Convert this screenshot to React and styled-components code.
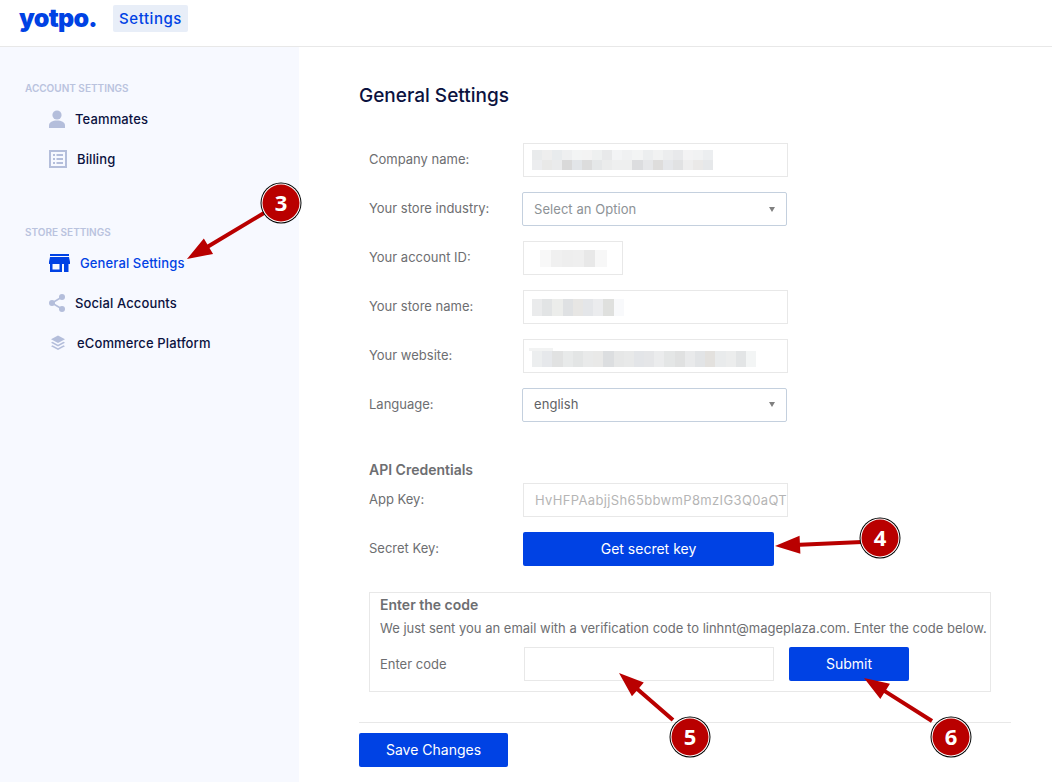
import React from 'react';
import styled, { createGlobalStyle } from 'styled-components';

const GlobalStyle = createGlobalStyle`
  html, body {
    margin: 0;
    padding: 0;
    background: #fff;
    overflow: hidden;
  }
  * {
    box-sizing: border-box;
  }
`;

const Page = styled.div`
  position: relative;
  width: 1052px;
  height: 782px;
  overflow: hidden;
  font-family: Inter, "Liberation Sans", sans-serif;
  background: #fff;
`;

const Header = styled.header`
  display: flex;
  align-items: flex-start;
  height: 47px;
  padding: 5px 0 0 19px;
  border-bottom: 1px solid #e8e8e8;
`;

const Logo = styled.div`
  width: 94px;
  height: 27px;
  font-family: Inter, sans-serif;
  font-size: 25px;
  font-weight: 900;
  line-height: 27px;
  letter-spacing: -0.7px;
  color: #0042e4;
`;

const AppTag = styled.div`
  width: 75px;
  height: 27px;
  border-radius: 2px;
  background: #e8eef8;
  color: #0042e4;
  font-size: 15px;
  font-weight: 500;
  line-height: 27px;
  letter-spacing: 0.55px;
  text-align: center;
`;

const Body = styled.div`
  display: flex;
  height: 735px;
`;

const Sidebar = styled.aside`
  width: 299px;
  flex: none;
  padding-top: 35px;
  background: #f7f9ff;
`;

const SectionLabel = styled.div`
  height: 12px;
  margin: 0 0 5px 25px;
  font-size: 10px;
  font-weight: 600;
  line-height: 12px;
  color: #bac3de;
`;

const NavList = styled.nav`
  display: flex;
  flex-direction: column;
  margin-bottom: 47px;
`;

const NavItem = styled.div`
  display: flex;
  align-items: center;
  gap: 10px;
  height: 40px;
  padding-left: 49px;
  font-size: 13px;
  font-weight: 500;
  letter-spacing: 0.12px;
  color: ${(p) => (p.$active ? '#0042e4' : '#0b1240')};
`;

const Icon = styled.svg`
  flex: none;
  display: block;
  fill: ${(p) => (p.$active ? '#0042e4' : '#b4bedb')};
`;

const Main = styled.main`
  flex: 1;
  padding: 37px 0 0 60px;
`;

const Title = styled.h1`
  margin: 0 0 35px;
  font-size: 19px;
  font-weight: 500;
  line-height: 24px;
  color: #0b1240;
`;

const Form = styled.div`
  display: flex;
  flex-direction: column;
  gap: 15px;
  padding-left: 10px;
`;

const Row = styled.div`
  display: flex;
  align-items: center;
  height: 34px;
`;

const Label = styled.div`
  width: ${(p) => p.$width || 154}px;
  flex: none;
  padding-bottom: ${(p) => p.$lift ?? 2}px;
  font-size: 13px;
  line-height: 18px;
  color: #6d6e71;
`;

const Field = styled.div`
  display: flex;
  align-items: center;
  width: ${(p) => p.$width || 265}px;
  height: 34px;
  padding-left: ${(p) => p.$pad ?? 8}px;
  border: 1px solid #e8e8e8;
  background: #fff;
  font-size: 13px;
  letter-spacing: 0.35px;
  color: #b5b5b5;
  white-space: nowrap;
  overflow: hidden;
`;

const Select = styled.div`
  display: flex;
  align-items: center;
  justify-content: space-between;
  width: 265px;
  height: 34px;
  margin-left: -1px;
  padding: 0 11px ${(p) => (p.$placeholder ? 0 : 2)}px 11px;
  border: 1px solid #c4d0de;
  border-radius: 2px;
  background: #fff;
  font-size: 13px;
  letter-spacing: 0.06px;
  color: ${(p) => (p.$placeholder ? '#8d9296' : '#5f6266')};
`;

const Caret = styled.span`
  width: 0;
  height: 0;
  border-left: 3.5px solid transparent;
  border-right: 3.5px solid transparent;
  border-top: 5px solid #808080;
`;

const Mosaic = styled.div`
  display: flex;
  flex-direction: column;
  flex: none;
`;

const MosaicRow = styled.div`
  display: flex;
`;

const Cell = styled.span`
  width: ${(p) => p.$w}px;
  height: ${(p) => p.$h}px;
  background: ${(p) => p.$c};
`;

const MosaicCap = styled.span`
  width: 24px;
  height: 3px;
  margin: 2px 0 0 -3px;
  background: #f2f3f3;
`;

const Heading = styled.div`
  margin-top: 24px;
  margin-bottom: -11px;
  font-size: 14px;
  font-weight: 600;
  line-height: 18px;
  color: #6d6e71;
`;

const Button = styled.button`
  display: block;
  width: ${(p) => p.$width}px;
  height: 34px;
  padding: 0;
  border: 0;
  border-radius: 2px;
  background: #0042e4;
  color: #fff;
  font-family: inherit;
  font-size: 14px;
  font-weight: 400;
  line-height: 34px;
`;

const CodeBox = styled.section`
  width: 622px;
  height: 100px;
  margin-top: 11px;
  padding: 3px 0 0 10px;
  border: 1px solid #e8e8e8;
`;

const CodeHeading = styled.div`
  font-size: 14px;
  font-weight: 600;
  line-height: 18px;
  color: #6d6e71;
`;

const CodeText = styled.p`
  margin: 5px 0 10px;
  font-size: 13px;
  line-height: 18px;
  color: #6d6e71;
  white-space: nowrap;
`;

const SubmitSlot = styled.div`
  margin-left: 15px;
`;

const Divider = styled.hr`
  width: 652px;
  height: 1px;
  margin: 30px 0 10px;
  border: 0;
  background: #e8e8e8;
`;

const Overlay = styled.svg`
  position: absolute;
  top: 0;
  left: 0;
  pointer-events: none;
`;

const BadgeNumber = styled.text`
  font-family: "Open Sans", sans-serif;
  font-size: 22px;
  font-weight: 700;
  fill: #fff;
  text-anchor: middle;
`;

const companyCells = [
  ['#e9ebec', '#eeeeee', '#e8ebed', '#eeeff0', '#f3f4f4', '#f3f3f3', '#eef0f0', '#e8e9ea', '#f3f4f5', '#f0f1f2', '#f3f4f4', '#eceeef', '#f1f2f2', '#ecedee', '#e8e9eb', '#f3f3f4', '#f1f2f3', '#eceef0'],
  ['#ecedef', '#e9e9e8', '#eaebec', '#d9d9d9', '#e2e5e8', '#dcdcdc', '#e5e7e8', '#ebecec', '#eeefef', '#eeefef', '#dcdddf', '#e6e7e9', '#dedddc', '#e5e7ea', '#e1e2e3', '#eeeeee', '#eae9e8', '#e6e8ea'],
];
const accountCells = [['#f8f8f8', '#f0f0f0', '#eeeeee', '#efefef', '#e8e8e8', '#f7f7f7']];
const storeCells = [['#eaebec', '#e2e4e5', '#ecedeb', '#dfe1e3', '#e7e6e4', '#e4e6e9', '#ebecee', '#dfe0de', '#f8f9fb']];
const websiteCells = [
  ['#eceeef', '#e6e8eb', '#e1e2e2', '#e8eaea', '#e3e5e5', '#e9eaea', '#e9e9e8', '#dcdee0', '#e6e7e7', '#e8e9e9', '#e3e5e8', '#e5e6e8', '#ebeced', '#e4e6e6', '#e0e1e1', '#e9eaeb', '#e2e4e6', '#e3e1de', '#e9ebec', '#eceded', '#e3e5e6', '#f3f5f5'],
];

function BlurredValue({ rows, width, height, cap }) {
  return (
    <Mosaic>
      {cap && <MosaicCap />}
      {rows.map((row, i) => (
        <MosaicRow key={i}>
          {row.map((color, j) => (
            <Cell key={j} $w={width} $h={height} $c={color} />
          ))}
        </MosaicRow>
      ))}
    </Mosaic>
  );
}

function PersonIcon() {
  return (
    <Icon width="16" height="18" viewBox="0 0 16 18">
      <circle cx="8" cy="5" r="4.6" />
      <path d="M0 18v-2.6C0 12.6 3.6 10.6 8 10.6s8 2 8 4.8V18z" />
    </Icon>
  );
}

function ListIcon() {
  return (
    <Icon width="18" height="18" viewBox="0 0 18 18">
      <path d="M0 0h18v18H0zM2 2v14h14V2z" fillRule="evenodd" />
      <path d="M4 4h2v2H4zM7.5 4H14v2H7.5zM4 8h2v2H4zM7.5 8H14v2H7.5zM4 12h2v2H4zM7.5 12H14v2H7.5z" />
    </Icon>
  );
}

function StoreIcon() {
  return (
    <Icon $active width="21" height="18" viewBox="0 0 21 18">
      <path d="M1 0h19v2H1z" />
      <path d="M1 3h19l1 5v2H0V8z" />
      <path d="M1 10h12v8H1zM3.500 10v5.500h7V10z" fillRule="evenodd" />
      <path d="M15 10h4.500v8H15z" />
    </Icon>
  );
}

function ShareIcon() {
  return (
    <Icon width="16" height="18" viewBox="0 0 16 18">
      <circle cx="13" cy="3" r="3" />
      <circle cx="3" cy="9" r="3" />
      <circle cx="13" cy="15" r="3" />
      <path d="M3 9l10-6M3 9l10 6" stroke="#b4bedb" strokeWidth="1.500" fill="none" />
    </Icon>
  );
}

function LayersIcon() {
  return (
    <Icon width="18" height="16" viewBox="0 0 18 16">
      <path d="M9 0.500l7 3.800-7 3.800-7-3.800z" />
      <path d="M3.500 6.800L9 9.800l5.500-3 1.500 0.900-7 3.800-7-3.800z" />
      <path d="M3.500 10.300L9 13.300l5.500-3 1.500 0.900L9 15l-7-3.800z" />
    </Icon>
  );
}

// arrow head and shaft worked out from the tip and tail points
function arrowPoints([tx, ty], [fx, fy]) {
  const len = Math.hypot(fx - tx, fy - ty);
  const ux = (fx - tx) / len;
  const uy = (fy - ty) / len;
  const head = 25;
  const wing = 9;
  const shaft = 2;
  const bx = tx + ux * head;
  const by = ty + uy * head;
  const nx = -uy;
  const ny = ux;
  return [
    [tx, ty],
    [bx + nx * wing, by + ny * wing],
    [bx + nx * shaft, by + ny * shaft],
    [fx + nx * shaft, fy + ny * shaft],
    [fx - nx * shaft, fy - ny * shaft],
    [bx - nx * shaft, by - ny * shaft],
    [bx - nx * wing, by - ny * wing],
  ]
    .map((p) => p.join(','))
    .join(' ');
}

const callouts = [
  { n: 3, cx: 281, cy: 203, tip: [187, 259], tail: [264, 213] },
  { n: 4, cx: 880, cy: 538, tip: [775, 546], tail: [862, 542] },
  { n: 5, cx: 690, cy: 737, tip: [619, 673], tail: [673, 720] },
  { n: 6, cx: 951, cy: 737, tip: [864, 678], tail: [932, 721] },
];

function Callouts() {
  return (
    <Overlay width="1052" height="782" viewBox="0 0 1052 782">
      {callouts.map(({ n, cx, cy, tip, tail }) => (
        <g key={n}>
          <polygon points={arrowPoints(tip, tail)} fill="#b90000" />
          <circle cx={cx} cy={cy} r="20.500" fill="#000" />
          <circle cx={cx} cy={cy} r="19.500" fill="#fff" />
          <circle cx={cx} cy={cy} r="18.500" fill="#b90000" />
          <BadgeNumber x={cx} y={cy + 8}>{n}</BadgeNumber>
        </g>
      ))}
    </Overlay>
  );
}

function App() {
  return (
    <Page>
      <GlobalStyle />
      <Header>
        <Logo>yotpo.</Logo>
        <AppTag>Settings</AppTag>
      </Header>
      <Body>
        <Sidebar>
          <SectionLabel>ACCOUNT SETTINGS</SectionLabel>
          <NavList>
            <NavItem><PersonIcon />Teammates</NavItem>
            <NavItem><ListIcon />Billing</NavItem>
          </NavList>
          <SectionLabel>STORE SETTINGS</SectionLabel>
          <NavList>
            <NavItem $active><StoreIcon />General Settings</NavItem>
            <NavItem><ShareIcon />Social Accounts</NavItem>
            <NavItem><LayersIcon />eCommerce Platform</NavItem>
          </NavList>
        </Sidebar>
        <Main>
          <Title>General Settings</Title>
          <Form>
            <Row>
              <Label>Company name:</Label>
              <Field>
                <BlurredValue rows={companyCells} width={10.060} height={10} />
              </Field>
            </Row>
            <Row>
              <Label>Your store industry:</Label>
              <Select $placeholder>Select an Option<Caret /></Select>
            </Row>
            <Row>
              <Label>Your account ID:</Label>
              <Field $width={100} $pad={16}>
                <BlurredValue rows={accountCells} width={11.100} height={17} />
              </Field>
            </Row>
            <Row>
              <Label>Your store name:</Label>
              <Field>
                <BlurredValue rows={storeCells} width={10.200} height={17} />
              </Field>
            </Row>
            <Row>
              <Label>Your website:</Label>
              <Field>
                <BlurredValue rows={websiteCells} width={10.200} height={16} cap />
              </Field>
            </Row>
            <Row>
              <Label>Language:</Label>
              <Select>english<Caret /></Select>
            </Row>
            <Heading>API Credentials</Heading>
            <Row>
              <Label>App Key:</Label>
              <Field $pad={11}>HvHFPAabjjSh65bbwmP8mzIG3Q0aQT</Field>
            </Row>
            <Row>
              <Label>Secret Key:</Label>
              <Button $width={251}>Get secret key</Button>
            </Row>
            <CodeBox>
              <CodeHeading>Enter the code</CodeHeading>
              <CodeText>We just sent you an email with a verification code to linhnt@mageplaza.com. Enter the code below.</CodeText>
              <Row>
                <Label $width={144} $lift={0}>Enter code</Label>
                <Field $width={250} />
                <SubmitSlot><Button $width={120}>Submit</Button></SubmitSlot>
              </Row>
            </CodeBox>
          </Form>
          <Divider />
          <Button $width={149}>Save Changes</Button>
        </Main>
      </Body>
      <Callouts />
    </Page>
  );
}

export default App;
